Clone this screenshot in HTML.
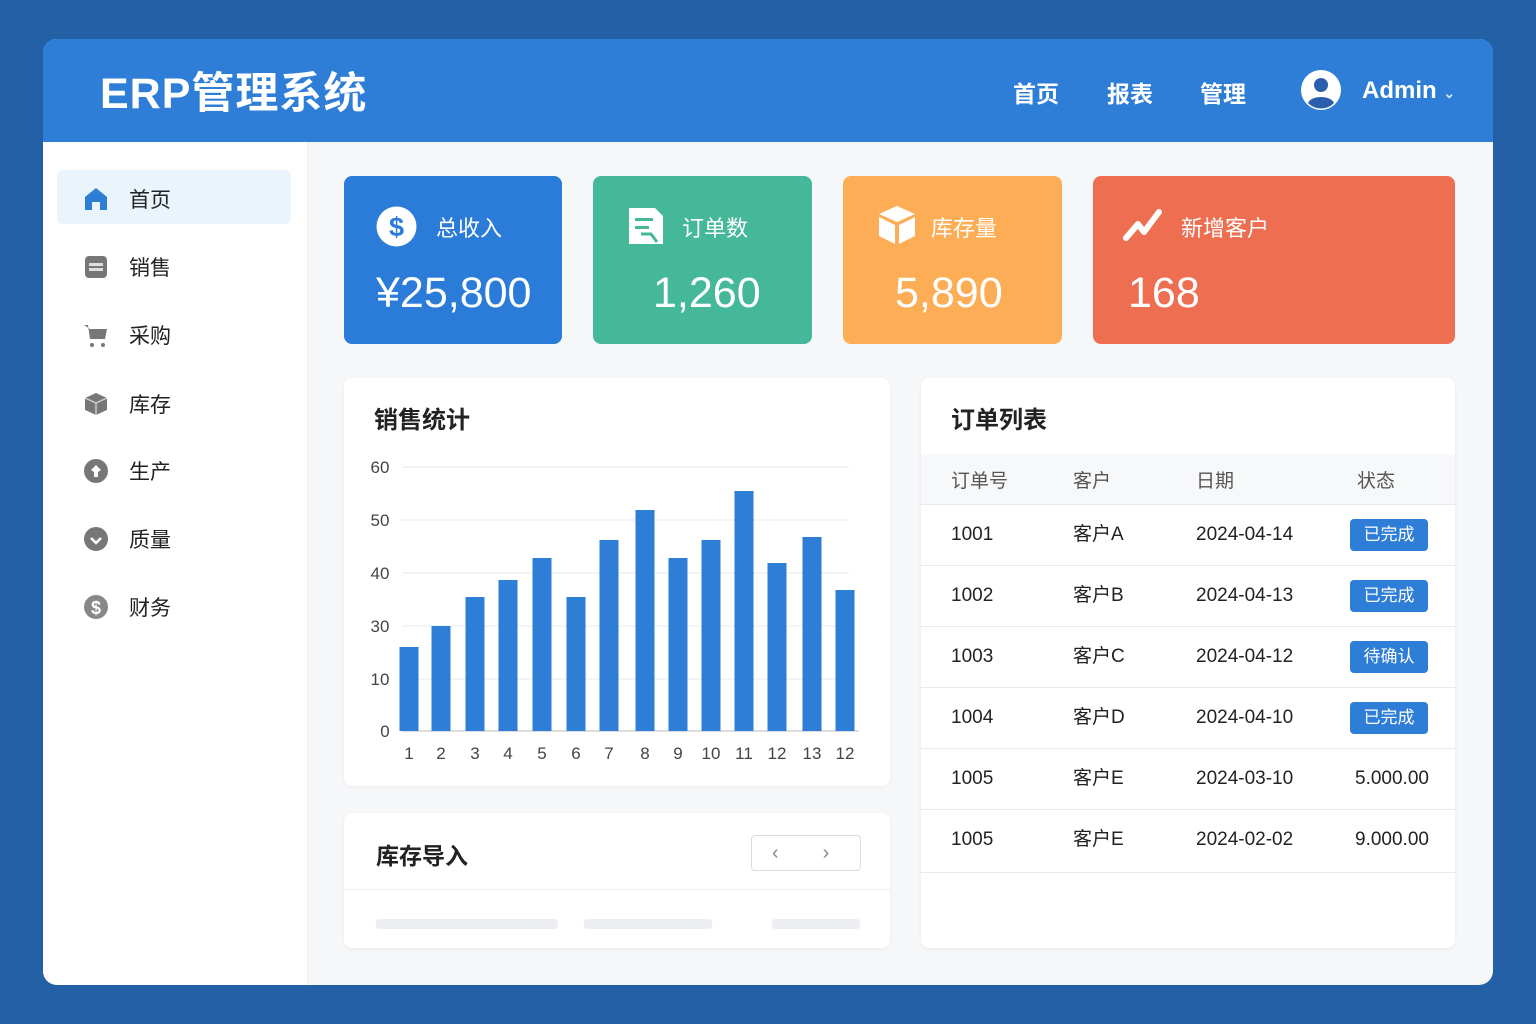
<!DOCTYPE html>
<html><head><meta charset="utf-8"><style>
*{margin:0;padding:0;box-sizing:border-box}
body{width:1536px;height:1024px;background:#2360a5;font-family:"Liberation Sans","Noto Sans CJK SC",sans-serif;position:relative;overflow:hidden}
.win{position:absolute;left:43px;top:39px;width:1450px;height:946px;border-radius:14px;overflow:hidden;background:#f6f7f9}
.hdr{position:absolute;left:0;top:0;width:1450px;height:103px;background:#2e7dd7;color:#fff}
.side{position:absolute;left:0;top:103px;width:265px;height:843px;background:#fff;border-right:1px solid #eceef2}
.abs{position:absolute}
.nav{position:absolute;left:40px;font-size:21px;color:#222;display:flex;align-items:center}
.card{position:absolute;top:137px;height:168px;border-radius:8px;color:#fff}
.panel{position:absolute;background:#fff;border-radius:8px;box-shadow:0 1px 4px rgba(0,0,0,.05)}
.badge{position:absolute;left:429px;width:78px;height:32px;background:#2e7dd7;color:#fff;border-radius:4px;font-size:17px;text-align:center;line-height:32px}
.row{position:absolute;left:0;width:534px;height:61px;border-bottom:1px solid #e8eaee;font-size:19px;color:#222}
.row span{position:absolute;top:0;line-height:60px;height:60px}
</style></head><body>
<div class="win">
<div class="hdr">
 <div class="abs" style="left:57px;top:20px;font-size:43px;font-weight:bold;letter-spacing:1px">ERP管理系统</div>
 <div class="abs" style="left:970px;top:36px;font-size:23px;font-weight:bold">首页</div>
 <div class="abs" style="left:1064px;top:36px;font-size:23px;font-weight:bold">报表</div>
 <div class="abs" style="left:1157px;top:36px;font-size:23px;font-weight:bold">管理</div>
 <svg class="abs" style="left:1258px;top:31px" width="40" height="40" viewBox="0 0 40 40"><circle cx="20" cy="20" r="20" fill="#fff"/><circle cx="20" cy="15" r="7" fill="#2a5fae"/><path d="M7 33c3-8 23-8 26 0a18 18 0 0 1-26 0z" fill="#2a5fae"/></svg>
 <div class="abs" style="left:1319px;top:38px;font-size:24px;font-weight:bold">Admin <span style="font-size:14px;opacity:.8">⌄</span></div>
</div>
<div class="side">
 <div class="abs" style="left:14px;top:28px;width:234px;height:54px;background:#eaf4fd;border-radius:6px"></div>
 <div class="nav" style="top:42px"><svg width="26" height="26" viewBox="0 0 26 26"><path d="M2 11L13 2l11 9v13h-7v-8h-8v8H2z" fill="#2e7dd7"/></svg><span style="margin-left:20px">首页</span></div>
 <div class="nav" style="top:110px"><svg width="26" height="26"><rect x="2" y="2" width="22" height="22" rx="4" fill="#777"/><rect x="6" y="9" width="14" height="3" fill="#ddd"/><rect x="6" y="14" width="14" height="3" fill="#ddd"/></svg><span style="margin-left:20px">销售</span></div>
 <div class="nav" style="top:178px"><svg width="26" height="26"><path d="M1 3h4l2 14h15l2-10H7" fill="#777"/><circle cx="9" cy="23" r="2" fill="#777"/><circle cx="20" cy="23" r="2" fill="#777"/></svg><span style="margin-left:20px">采购</span></div>
 <div class="nav" style="top:247px"><svg width="26" height="26"><path d="M13 2l11 5v12l-11 5-11-5V7z" fill="#777"/><path d="M2 7l11 5 11-5M13 12v12" stroke="#ccc" stroke-width="1.5" fill="none"/></svg><span style="margin-left:20px">库存</span></div>
 <div class="nav" style="top:314px"><svg width="26" height="26"><circle cx="13" cy="13" r="12" fill="#777"/><path d="M8 12l5-5 5 5-3 2v5h-4v-5z" fill="#fff"/></svg><span style="margin-left:20px">生产</span></div>
 <div class="nav" style="top:382px"><svg width="26" height="26"><circle cx="13" cy="13" r="12" fill="#777"/><path d="M8 12l5 5 5-5" stroke="#fff" stroke-width="2.5" fill="none"/></svg><span style="margin-left:20px">质量</span></div>
 <div class="nav" style="top:450px"><svg width="26" height="26"><circle cx="13" cy="13" r="12" fill="#888"/><text x="13" y="20" font-size="18" font-weight="bold" text-anchor="middle" fill="#fff" font-family="Liberation Sans">$</text></svg><span style="margin-left:20px">财务</span></div>
</div>

<div class="card" style="left:301px;width:218px;background:#2b7bd9">
 <svg class="abs" style="left:32px;top:30px" width="41" height="41"><circle cx="20.5" cy="20.5" r="20" fill="#fff"/><text x="20.5" y="30" font-size="27" font-weight="bold" text-anchor="middle" fill="#2b7bd9" font-family="Liberation Sans">$</text></svg>
 <div class="abs" style="left:92px;top:35px;font-size:22px">总收入</div>
 <div class="abs" style="left:32px;top:93px;font-size:43px">¥25,800</div>
</div>
<div class="card" style="left:550px;width:219px;background:#45b89a">
 <svg class="abs" style="left:34px;top:30px" width="38" height="40"><path d="M2 2h26l8 8v28H2z" fill="#fff"/><rect x="8" y="12" width="18" height="3" fill="#45b89a"/><rect x="8" y="20" width="14" height="3" fill="#45b89a"/><path d="M14 28h10l6 8" stroke="#45b89a" stroke-width="3" fill="none"/></svg>
 <div class="abs" style="left:89px;top:35px;font-size:22px">订单数</div>
 <div class="abs" style="left:60px;top:93px;font-size:43px">1,260</div>
</div>
<div class="card" style="left:800px;width:219px;background:#fdad55">
 <svg class="abs" style="left:34px;top:28px" width="40" height="42"><path d="M20 2l18 8-18 8-18-8z" fill="#fff"/><path d="M2 13l16 8v19L2 32zM38 13l-16 8v19l16-8z" fill="#fff"/></svg>
 <div class="abs" style="left:88px;top:35px;font-size:22px">库存量</div>
 <div class="abs" style="left:52px;top:93px;font-size:43px">5,890</div>
</div>
<div class="card" style="left:1050px;width:362px;background:#ee6e52">
 <svg class="abs" style="left:30px;top:32px" width="40" height="36"><path d="M3 30l12-14 6 8L36 4" stroke="#fff" stroke-width="6" fill="none" stroke-linejoin="round" stroke-linecap="round"/></svg>
 <div class="abs" style="left:88px;top:35px;font-size:22px">新增客户</div>
 <div class="abs" style="left:35px;top:93px;font-size:43px">168</div>
</div>

<div class="panel" style="left:301px;top:339px;width:546px;height:408px">
 <div class="abs" style="left:30px;top:22px;font-size:24px;font-weight:bold;color:#222">销售统计</div>
 <svg class="abs" style="left:0;top:0" width="546" height="408">
  <g stroke="#e6e8ec" stroke-width="1">
   <line x1="58" x2="505" y1="89" y2="89"/><line x1="58" x2="505" y1="142" y2="142"/><line x1="58" x2="505" y1="195" y2="195"/><line x1="58" x2="505" y1="248" y2="248"/><line x1="58" x2="505" y1="301" y2="301"/><line x1="58" x2="515" y1="353" y2="353" stroke="#bbb"/>
  </g>
  <g font-size="17" fill="#444" font-family="Liberation Sans" text-anchor="middle">
   <text x="36" y="95">60</text><text x="36" y="148">50</text><text x="36" y="201">40</text><text x="36" y="254">30</text><text x="36" y="307">10</text><text x="41" y="359">0</text>
  </g>
  <g fill="#2e7dd7" id="b"></g>
  <g font-size="17" fill="#444" font-family="Liberation Sans" text-anchor="middle" id="l"></g>
 </svg>
</div>
<div class="panel" style="left:301px;top:774px;width:546px;height:135px">
 <div class="abs" style="left:32px;top:24px;font-size:23px;font-weight:bold;color:#222">库存导入</div>
 <div class="abs" style="left:407px;top:22px;width:110px;height:36px;border:1px solid #d9dce2;border-radius:4px;color:#888;font-size:20px;line-height:34px"><span style="margin-left:20px">‹</span><span style="margin-left:44px">›</span></div>
 <div class="abs" style="left:0;top:76px;width:546px;border-top:1px solid #eef0f3"></div>
 <div class="abs" style="left:32px;top:106px;width:182px;height:10px;background:#eceef1;border-radius:3px"></div>
 <div class="abs" style="left:240px;top:106px;width:128px;height:10px;background:#eceef1;border-radius:3px"></div>
 <div class="abs" style="left:428px;top:106px;width:88px;height:10px;background:#eceef1;border-radius:3px"></div>
</div>

<div class="panel" style="left:878px;top:339px;width:534px;height:570px">
 <div class="abs" style="left:30px;top:22px;font-size:24px;font-weight:bold;color:#222">订单列表</div>
 <div class="abs" style="left:0;top:76px;width:534px;height:51px;background:#f7f8fa;border-bottom:1px solid #e8eaee;font-size:19px;color:#555">
  <span class="abs" style="left:30px;top:12px">订单号</span><span class="abs" style="left:152px;top:12px">客户</span><span class="abs" style="left:275px;top:12px">日期</span><span class="abs" style="left:436px;top:12px">状态</span>
 </div>
 <div class="row" style="top:127px"><span style="left:30px">1001</span><span style="left:152px">客户A</span><span style="left:275px">2024-04-14</span><div class="badge" style="top:14px">已完成</div></div>
 <div class="row" style="top:188px"><span style="left:30px">1002</span><span style="left:152px">客户B</span><span style="left:275px">2024-04-13</span><div class="badge" style="top:14px">已完成</div></div>
 <div class="row" style="top:249px"><span style="left:30px">1003</span><span style="left:152px">客户C</span><span style="left:275px">2024-04-12</span><div class="badge" style="top:14px">待确认</div></div>
 <div class="row" style="top:310px"><span style="left:30px">1004</span><span style="left:152px">客户D</span><span style="left:275px">2024-04-10</span><div class="badge" style="top:14px">已完成</div></div>
 <div class="row" style="top:371px"><span style="left:30px">1005</span><span style="left:152px">客户E</span><span style="left:275px">2024-03-10</span><span style="left:434px">5.000.00</span></div>
 <div class="row" style="top:432px;height:63px"><span style="left:30px">1005</span><span style="left:152px">客户E</span><span style="left:275px">2024-02-02</span><span style="left:434px">9.000.00</span></div>
</div>
</div>
<script>
var c=[409,441,475,508,542,576,609,645,678,711,744,777,812,845],t=[647,626,597,580,558,597,540,510,558,540,491,563,537,590],lb=[1,2,3,4,5,6,7,8,9,10,11,12,13,12];
var b=document.getElementById('b'),l=document.getElementById('l'),ns='http://www.w3.org/2000/svg';
for(var i=0;i<14;i++){var r=document.createElementNS(ns,'rect');r.setAttribute('x',c[i]-9.5-344);r.setAttribute('y',t[i]-378);r.setAttribute('width',19);r.setAttribute('height',731-t[i]);b.appendChild(r);
var x=document.createElementNS(ns,'text');x.setAttribute('x',c[i]-344);x.setAttribute('y',381);x.textContent=lb[i];l.appendChild(x);}
</script>
</body></html>
